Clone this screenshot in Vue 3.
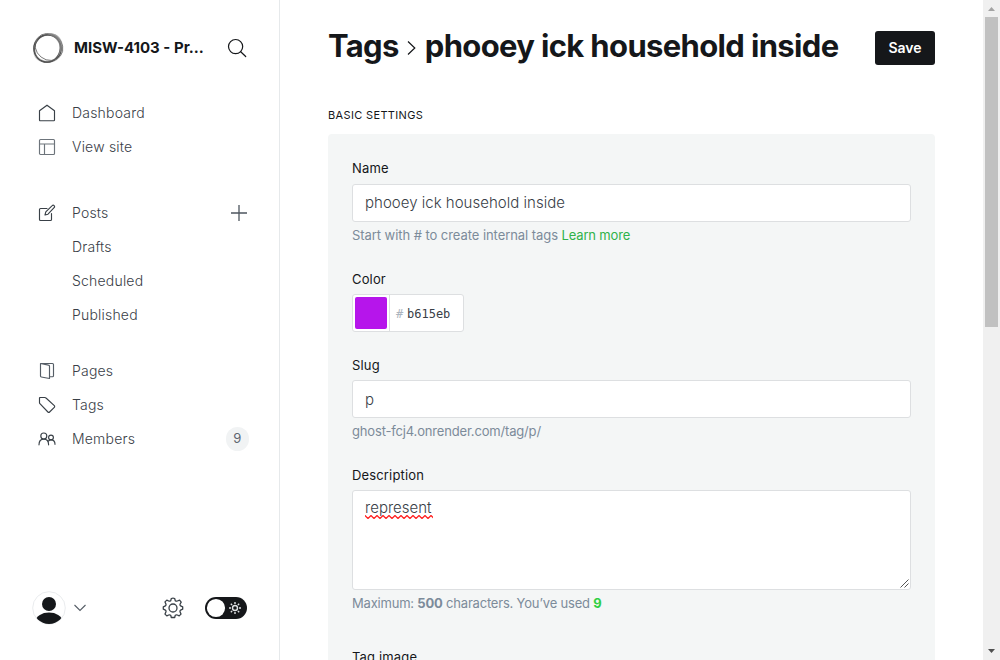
<script setup>
const posts = ['Drafts', 'Scheduled', 'Published']
const color = 'b615eb'
</script>

<template>
  <div class="app">
    <aside class="sidebar">
      <header class="brand">
        <svg class="logo" viewBox="0 0 32 32" width="32" height="32" fill="none">
          <path fill-rule="evenodd" d="M1 17C1 7 8 1.500 17 1.200 25 .6 31 7 31 15S26 30.800 15.500 30.800 1 25 1 17zM3.200 16.500C3.200 24 8 28.600 15.500 28.600S28 23 28 15.500 22.500 3.800 16 3.800 3.200 9 3.200 16.500z" fill="#aaa" opacity=".7" />
          <ellipse cx="15.500" cy="16.500" rx="13.700" ry="13.600" stroke="#444" stroke-width="1.100" />
          <ellipse cx="17" cy="15" rx="14.500" ry="12.800" transform="rotate(38 17 15)" stroke="#777" stroke-width=".9" />
          <ellipse cx="15.400" cy="16.500" rx="12.600" ry="14" transform="rotate(22 15.400 16.500)" stroke="#555" stroke-width="1" />
          <path d="M15 2.200c6-1.800 12 .5 14 7 2 5 1 10-3 15 2-6 2.500-11-.5-15-2.500-4-6-6-10.500-7z" fill="#888" opacity=".65" />
        </svg>
        <span class="site">MISW-4103 - Pr...</span>
        <svg class="search" viewBox="0 0 20 20" width="20" height="20" fill="none" stroke="#15171a" stroke-width="1.200" stroke-linecap="round">
          <circle cx="8.600" cy="8.600" r="7.100" /><path d="M13.700 13.700l5 4.800" />
        </svg>
      </header>
      <nav>
        <div class="group">
          <a class="item">
            <svg class="ic" viewBox="0 0 18 18"><path d="M1.500 6.800v9.200a.7.700 0 0 0 .7.700h13.600a.7.700 0 0 0 .7-.7V6.800L9 1.200z" /></svg><span>Dashboard</span>
          </a>
          <a class="item">
            <svg class="ic light" viewBox="0 0 18 18"><rect x="1.500" y="1.500" width="15" height="15" rx="1" /><path d="M1.500 6h15M6.500 6v10.500" /></svg><span>View site</span>
          </a>
        </div>
        <div class="group posts">
          <a class="item">
            <svg class="ic" viewBox="0 0 18 18"><path d="M9 4.500H2.500A1 1 0 0 0 1.500 5.500v10A1 1 0 0 0 2.500 16.500h10a1 1 0 0 0 1-1V9.500M7 11l.8-3.200 6.400-6.100a1.300 1.300 0 0 1 1.900 1.900L10 10.200z" /></svg><span>Posts</span>
            <svg class="plus" viewBox="0 0 18 18" width="18" height="18"><path d="M9 1v16M1 9h16" stroke="#4e565f" stroke-width="1.300" /></svg>
          </a>
          <a v-for="p in posts" :key="p" class="item sub"><span>{{ p }}</span></a>
        </div>
        <div class="group">
          <a class="item">
            <svg class="ic mid" viewBox="0 0 18 18"><path d="M2.500 1.500l8 1.600c.7.100 1 .5 1 1.100v12.300L3.300 15c-.5-.1-.8-.4-.8-.9zM2.500 1.500h12a1 1 0 0 1 1 1v11.200a1 1 0 0 1-1 1h-3" /></svg><span>Pages</span>
          </a>
          <a class="item">
            <svg class="ic" viewBox="0 0 18 18"><path d="M1.500 2v4.700c0 .4.100.7.400 1l8 8.300a1.200 1.200 0 0 0 1.700 0l4.700-4.700a1.200 1.200 0 0 0 0-1.700L8 2C7.600 1.600 7.300 1.500 6.800 1.500H2z" /></svg><span>Tags</span>
          </a>
          <a class="item">
            <svg class="ic" viewBox="0 0 18 18"><circle cx="5.800" cy="6" r="3" /><circle cx="13" cy="7.500" r="2.400" /><path d="M1 14.800c0-4 2-5.700 4.800-5.700s4.800 1.700 4.800 5.700M10.500 11c.7-.8 1.400-1.100 2.500-1.100 2.300 0 4 1.600 4 4.400" /></svg><span>Members</span>
            <span class="badge">9</span>
          </a>
        </div>
      </nav>
      <footer class="bottom">
        <svg class="avatar" viewBox="0 0 34 34" width="34" height="34">
          <defs><clipPath id="face"><circle cx="17" cy="17" r="16" /></clipPath></defs>
          <circle cx="17" cy="17" r="16.300" fill="#fff" stroke="#e3e6e9" stroke-width=".8" />
          <circle cx="17" cy="13" r="7" fill="#15171a" />
          <ellipse cx="17" cy="29.600" rx="13" ry="8" fill="#15171a" clip-path="url(#face)" />
        </svg>
        <svg class="chev" viewBox="0 0 12 8" width="12" height="8" fill="none" stroke="#555d66" stroke-width="1.100"><path d="M.5 1l5.500 5.500L11.500 1" /></svg>
        <svg class="gear" viewBox="-11 -11 22 22" width="22" height="22" fill="none" stroke="#394047" stroke-width="1.300" stroke-linejoin="round">
          <circle r="4" />
          <path d="M-1.700-9.500Q0-10.200 1.700-9.500L2.300-7.200Q3.300-6.500 4.300-7L6.600-7.800 8.200-5.900 7-3.800Q6.800-2.600 7.600-2.200L9.700-1.200V1.200L7.600 2.200Q6.800 2.600 7 3.800L8 6.100 6.200 7.900 4.300 7Q3.300 6.500 2.300 7.200L1.700 9.500H-1.700L-2.300 7.200Q-3.300 6.500-4.300 7L-6.200 7.900-8 6.100-7 3.800Q-6.800 2.600-7.600 2.200L-9.700 1.200V-1.200L-7.600-2.200Q-6.800-2.600-7-3.800L-8-6.100-6.200-7.900-4.300-7Q-3.300-6.500-2.300-7.200Z" />
        </svg>
        <svg class="toggle" viewBox="0 0 42 22" width="42" height="22" fill="none">
          <rect width="42" height="22" rx="11" fill="#15171a" /><circle cx="11" cy="11" r="9.100" fill="#fff" />
          <g stroke="#dfe1e3" stroke-width="1.400"><circle cx="30" cy="11" r="2.500" /><path d="M30 5v2M30 15v2M24 11h2M34 11h2M25.800 6.800l1.300 1.300M32.900 13.900l1.300 1.300M34.200 6.800l-1.300 1.300M27.100 13.900l-1.300 1.300" /></g>
        </svg>
      </footer>
    </aside>

    <main class="main">
      <header class="top">
        <h1>
          <span class="crumb">Tags</span>
          <svg viewBox="0 0 9 16" width="9" height="16" fill="none" stroke="#15171a" stroke-width="1.200"><path d="M1 1.500l6.800 6.500L1 14.500" /></svg>
          <span class="title">phooey ick household inside</span>
        </h1>
        <button class="save">Save</button>
      </header>
      <h4>BASIC SETTINGS</h4>
      <section class="panel">
        <div class="field name">
          <label>Name</label>
          <div class="input">phooey ick household inside</div>
          <p>Start with # to create internal tags <a>Learn more</a></p>
        </div>
        <div class="field color">
          <label>Color</label>
          <div class="picker">
            <div class="swatch"><i :style="{ background: '#' + color }"></i></div>
            <span class="hash">#</span><span class="hex">{{ color }}</span>
          </div>
        </div>
        <div class="field slug">
          <label>Slug</label>
          <div class="input">p</div>
          <p>ghost-fcj4.onrender.com/tag/p/</p>
        </div>
        <div class="field desc">
          <label>Description</label>
          <div class="input area">
            <span class="spell">represent<svg width="68" height="4" fill="none"><defs><pattern id="wave" width="6" height="4" patternUnits="userSpaceOnUse"><path d="M-1.500 2L0 .5 3 3.500 6 .5 7.500 2" stroke="#f22" stroke-width="1.300" /></pattern></defs><rect width="68" height="4" fill="url(#wave)" /></svg></span>
            <svg class="grip" width="9" height="9" stroke="#555" stroke-width="1"><path d="M.5 8.500l8-8M4.500 8.500l4-4" /></svg>
          </div>
          <p>Maximum: <b>500</b> characters. You’ve used <b class="ok">9</b></p>
        </div>
        <div class="field"><label>Tag image</label></div>
      </section>
    </main>

    <div class="scroll">
      <svg width="7" height="4"><path d="M0 4L3.500 0 7 4z" fill="#a3a3a3" /></svg>
      <div class="thumb"></div>
      <svg class="down" width="7" height="4"><path d="M0 0h7L3.500 4z" fill="#505050" /></svg>
    </div>
  </div>
</template>

<style>
body { margin: 0; overflow: hidden; }
</style>
<style scoped>
* { box-sizing: border-box; }
.app { display: flex; width: 1000px; height: 660px; overflow: hidden; background: #fff; color: #15171a; font-family: Inter, "Liberation Sans", sans-serif; }
svg { display: block; flex: none; }
.sidebar { width: 280px; height: 660px; border-right: 1px solid #e6e9eb; display: flex; flex-direction: column; }
.brand { display: flex; align-items: center; height: 32px; margin: 32px 32px 0 32px; }
.site { font-size: 15px; font-weight: 700; margin-left: 10px; padding-bottom: 2px; white-space: nowrap; }
.search { margin-left: auto; }
nav { margin-top: 32px; }
.group { margin-bottom: 32px; }
.group.posts { margin-bottom: 22px; }
.item { display: flex; align-items: center; height: 34px; padding: 0 31px 0 38px; font-size: 14px; font-weight: 350; letter-spacing: .2px; color: #394047; white-space: nowrap; }
.item span { padding-bottom: 2px; }
.item.sub { padding-left: 72px; }
.ic { width: 18px; height: 18px; margin-right: 16px; fill: none; stroke: #394047; stroke-width: 1.15; stroke-linejoin: round; stroke-linecap: round; }
.ic.light { stroke: #6d747b; }
.ic.mid { stroke: #555d66; }
.plus { margin-left: auto; }
.item .badge { margin-left: auto; margin-right: -1px; width: 23px; height: 24px; padding: 0; border-radius: 12px; background: #f1f3f4; color: #5d6670; font-size: 13px; font-weight: 400; line-height: 23px; text-align: center; }
.bottom { display: flex; align-items: center; height: 34px; margin: auto 32px 35px 32px; }
.chev { margin-left: 8px; }
.gear { margin-left: 76px; }
.toggle { margin-left: 21px; }
.main { width: 703px; padding: 31px 48px 0; }
.top { display: flex; justify-content: space-between; height: 34px; }
h1 { display: flex; align-items: center; margin: 0; font-size: 31px; line-height: 34px; font-weight: 700; letter-spacing: -.65px; white-space: nowrap; height: 30px; }
h1 svg { margin: 4px 9px 0 8px; }
.save { width: 60px; height: 34px; padding: 0 0 1px; border: 0; border-radius: 3px; background: #15171a; color: #fff; font: 600 14px Inter, sans-serif; }
h4 { margin: 43px 0 0; height: 26px; font-size: 11px; line-height: 15px; font-weight: 400; letter-spacing: .35px; }
.panel { width: 607px; height: 540px; padding: 24px; background: #f4f6f6; border-radius: 4px; }
.field label { display: block; height: 20px; margin-bottom: 5px; font-size: 13px; line-height: 20px; letter-spacing: .15px; }
.field.name label { margin-bottom: 6px; }
.name { height: 111px; }
.color { height: 86px; }
.slug { height: 110px; }
.desc { height: 182px; }
.input { height: 38px; border: 1px solid #dddfe1; border-radius: 3px; background: #fff; color: #394047; padding: 0 12px; font-size: 15px; font-weight: 350; line-height: 36px; letter-spacing: .02px; position: relative; }
.slug .input { line-height: 38px; }
.field p { margin: 4px 0 0; font-size: 13px; line-height: 18px; letter-spacing: -.17px; color: #7c8b9a; white-space: nowrap; }
.field.name p { letter-spacing: -.06px; }
.field.name p a { letter-spacing: -.18px; }
.field.desc p { letter-spacing: -.2px; }
.field p a { color: #30b24a; }
.ok { color: #30cf43; }
.picker { display: flex; align-items: center; width: 112px; height: 38px; border: 1px solid #dddfe1; border-radius: 3px; background: #fff; font: 12px/14px "DejaVu Sans Mono", monospace; }
.swatch { width: 37px; height: 36px; padding: 2px; border-right: 1px solid #dddfe1; }
.swatch i { display: block; width: 32px; height: 32px; border-radius: 2px; }
.hash { margin-left: 6px; padding-top: 2px; width: 11px; color: #abb4be; }
.hex { padding-top: 2px; color: #394047; }
.input.area { height: 100px; line-height: 22px; padding-top: 6px; }
.spell { position: relative; display: inline-block; }
.spell svg { position: absolute; left: 0; top: 18px; }
.grip { position: absolute; right: 1px; bottom: 1px; }
.scroll { width: 17px; height: 660px; background: #f0f0f0; display: flex; flex-direction: column; align-items: center; padding-top: 7px; }
.thumb { width: 13px; height: 310px; margin-top: 6px; background: #c1c1c1; }
.down { margin-top: auto; margin-bottom: 7px; }
</style>
